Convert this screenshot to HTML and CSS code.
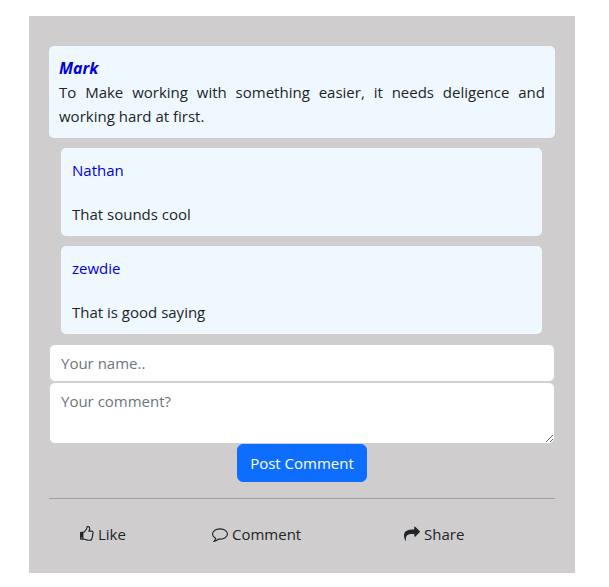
FILE: index.html
```html
<!DOCTYPE html>
<html lang="en">
<head>
<meta charset="utf-8">
<meta name="viewport" content="width=device-width, initial-scale=1">
<title>Post</title>
<link rel="stylesheet" href="styles.css">
</head>
<body>
<main class="card">
  <article class="post">
    <h1 class="post-author">Mark</h1>
    <p class="post-text">To Make working with something easier, it needs deligence and working hard at first.</p>
  </article>
  <section class="replies">
    <article class="reply">
      <h2 class="reply-author">Nathan</h2>
      <p class="reply-text">That sounds cool</p>
    </article>
    <article class="reply">
      <h2 class="reply-author">zewdie</h2>
      <p class="reply-text">That is good saying</p>
    </article>
  </section>
  <form class="form">
    <input class="field" type="text" aria-label="Your name" placeholder="Your name..">
    <textarea class="field" rows="2" aria-label="Your comment" placeholder="Your comment?"></textarea>
    <button class="submit" type="button">Post Comment</button>
  </form>
  <hr class="rule">
  <footer class="actions">
    <button class="action" type="button">
      <svg class="icon icon-like" viewBox="128 0 1568 1792" aria-hidden="true"><path d="M384 1344q0-26-19-45t-45-19-45 19-19 45 19 45 45 19 45-19 19-45zm1152-576q0-51-39-89.5t-89-38.5h-352q0-58 48-159.5t48-160.5q0-98-32-145t-128-47q-26 26-38 85t-30.5 125.5-59.5 109.5q-22 23-77 91-4 5-23 30t-31.5 41-34.5 42.5-40 44-38.5 35.5-40 27-35.5 9h-32v640h32q13 0 31.5 3t33 6.5 38 11 35 11.5 35.5 12.5 29 10.5q211 73 342 73h121q192 0 192-167 0-26-5-56 30-16 47.5-52.5t17.5-73.5-18-69q53-50 53-119 0-25-10-55.5t-25-47.5q32-1 53.5-47t21.5-81zm128-1q0 89-49 163 9 33 9 69 0 77-38 144 3 21 3 43 0 101-60 178 1 139-85 219.5t-227 80.5h-129q-96 0-189.5-22.5t-216.5-65.5q-116-40-138-40h-288q-53 0-90.5-37.5t-37.5-90.5v-640q0-53 37.5-90.5t90.5-37.5h274q36-24 137-155 58-75 107-128 24-25 35.5-85.5t30.5-126.5 62-108q39-37 90-37 84 0 151 32.5t102 101.5 35 186q0 93-48 192h176q104 0 180 76t76 179z"/></svg>
      Like
    </button>
    <button class="action" type="button">
      <svg class="icon" viewBox="0 0 1792 1792" aria-hidden="true"><path d="M896 384q-204 0-381.5 69.5t-282 187.5-104.5 255q0 112 71.5 213.5t201.5 175.5l87 50-27 96q-24 91-70 172 152-63 275-171l43-38 57 6q69 8 130 8 204 0 381.5-69.5t282-187.5 104.5-255-104.5-255-282-187.5-381.5-69.5zm896 512q0 174-120 321.5t-326 233-450 85.5q-70 0-145-8-198 175-460 242-49 14-114 22h-5q-15 0-27-10.5t-16-27.5v-1q-3-4-.5-12t2-10 4.5-9.5l6-9 7-8.5 8-9q7-8 31-34.5t34.5-38 31-39.5 32.5-51 27-59 26-76q-157-89-247.5-220t-90.5-281q0-174 120-321.5t326-233 450-85.5 450 85.5 326 233 120 321.5z"/></svg>
      Comment
    </button>
    <button class="action" type="button">
      <svg class="icon" viewBox="0 0 1792 1792" aria-hidden="true"><path d="M1792 640q0 26-19 45l-512 512q-19 19-45 19t-45-19-19-45v-256h-224q-98 0-175.5 6t-154 21.5-133 42.5-105.5 69.5-80 101-48.5 138.5-17.5 181q0 55 5 123 0 6 2.5 23.5t2.5 26.5q0 15-8.5 25t-23.5 10q-16 0-28-17-7-9-13-22t-13.5-30-10.5-24q-127-285-127-451 0-199 53-333 162-403 875-403h224v-256q0-26 19-45t45-19 45 19l512 512q19 19 19 45z"/></svg>
      Share
    </button>
  </footer>
</main>
</body>
</html>
```
FILE: styles.css
```css
* {
  box-sizing: border-box;
}

body {
  margin: 0;
  background: #fff;
  color: #212529;
  font-family: "Open Sans", "Noto Sans", sans-serif;
  font-size: 15px;
  line-height: 24px;
}

h1, h2, p {
  margin: 0;
  font: inherit;
}

button, input, textarea {
  font: inherit;
}

.card {
  margin: 16px 34px 14px 29px;
  padding: 30px 20px 27px;
  background: #cfcdce;
}

.post {
  padding: 10px;
  border-radius: 5px;
  background: #f0f8ff;
}

.post .post-author {
  color: #0000d8;
  font-size: 16px;
  font-weight: 700;
  font-style: italic;
}

.post-text {
  text-align: justify;
}

.replies {
  display: grid;
  gap: 10px;
  margin: 10px 13px 10px 12px;
}

.reply {
  display: grid;
  gap: 20px;
  padding: 10px 11px;
  border-radius: 5px;
  background: #f0f8ff;
}

.reply-author {
  color: #0000d8;
}

.form {
  display: flex;
  flex-direction: column;
}

.field {
  display: block;
  width: 100%;
  margin: 0;
  padding: 6px 11px;
  border: 1px solid #ced0d6;
  border-radius: 6px;
  background: #fff;
  color: #212529;
}

.field::placeholder {
  color: #6c757d;
  opacity: 1;
}

textarea.field {
  resize: vertical;
}

.submit {
  align-self: center;
  padding: 6px 12px;
  border: 1px solid #0d6efd;
  border-radius: 6px;
  background: #0d6efd;
  color: #fff;
}

.rule {
  height: 1px;
  margin: 16px 0 23px;
  border: 0;
  background: #a0a0a2;
}

.actions {
  display: grid;
  grid-template-columns: 132fr 192fr 151fr;
  padding-left: 31px;
}

.action {
  display: flex;
  align-items: center;
  gap: 4px;
  padding: 0;
  border: 0;
  background: none;
  color: inherit;
}

.icon {
  width: 16px;
  height: 16px;
  fill: currentColor;
}

.icon-like {
  width: 14px;
}
```
